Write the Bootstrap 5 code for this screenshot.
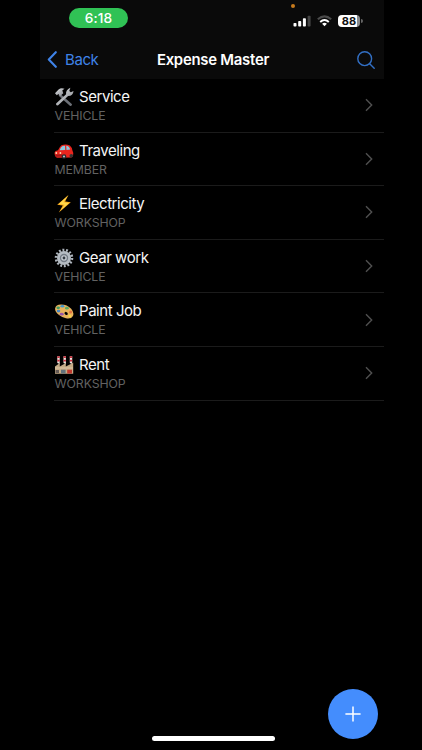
<!DOCTYPE html>
<html lang="en">
<head>
<meta charset="utf-8">
<meta name="viewport" content="width=device-width, initial-scale=1">
<title>Expense Master</title>
<link href="https://cdn.jsdelivr.net/npm/bootstrap@5.3.0/dist/css/bootstrap.min.css" rel="stylesheet">
<style>
body{background:#000;font-family:Inter,"Liberation Sans",sans-serif;color:#f5f5f5;overflow:hidden}
svg{display:block;flex:none}
.phone{width:344px;height:750px;margin-left:40px}
.top-area{background:#0a0a0a;height:79px}
.status-line{height:40px;padding:8px 21px 0 29px}
.time-pill{width:59px;height:20px;background:#30c255;color:#fff;font-size:13.7px;font-weight:500;line-height:20px;letter-spacing:.1px}
.status-icons{padding-top:7px;gap:6px}
.battery-level{width:22px;height:12px;border-radius:4px;background:linear-gradient(90deg,#fff 88%,#8b8b8b 88%);color:#111;font-size:11px;font-weight:700;line-height:12.5px}
.battery-cap{width:2px;height:4px;background:#666;border-radius:0 2px 2px 0;margin-left:1px}
.mic-dot{left:251px;top:4px;width:4px;height:4px;background:#c77a1c}
.title-line{height:39px;padding:0 9px 0 7px}
.back-link{color:#3f83e8;font-size:15px;line-height:20px;gap:8px;width:100px;letter-spacing:-.4px}
.page-title{font-size:14.9px;font-weight:600;line-height:20px;color:#fff;letter-spacing:-.25px;padding-left:4px}
.entry{height:53.6px;margin-left:14px;padding:0 11.5px 0 0;border-bottom:1px solid #1b1b1b}
.entry-text{padding-top:8px}
.entry-name{font-size:15px;line-height:20px;gap:5px;letter-spacing:-.45px}
.entry-kind{font-size:12.3px;line-height:17px;color:#626262;letter-spacing:-.1px;padding-left:.5px}
.add-btn{left:327.5px;top:689px;width:50px;height:50px;background:#448dfd}
.home-bar{left:151.5px;top:736px;width:123.5px;height:4.5px;background:#fff}
</style>
<script src="https://cdn.jsdelivr.net/npm/bootstrap@5.3.0/dist/js/bootstrap.bundle.min.js"></script>
</head>
<body>
<svg width="0" height="0" class="position-absolute"><defs>
<symbol id="chev" viewBox="0 0 8 14"><path d="M1 1.2 6.7 7 1 12.8" fill="none" stroke="#505050" stroke-width="1.4"/></symbol>
<linearGradient id="steel" x2="1" y2="1"><stop stop-color="#e0e2e5"/><stop offset="1" stop-color="#85888e"/></linearGradient>
</defs></svg>
<main class="phone position-relative">
<header class="top-area">
  <div class="status-line d-flex justify-content-between align-items-start">
    <div class="time-pill rounded-pill text-center">6:18</div>
    <div class="status-icons d-flex align-items-center">
      <svg width="18" height="12" viewBox="0 0 18 12"><g fill="#fff"><rect x=".5" y="8" width="3" height="3.5" rx=".8"/><rect x="5.2" y="6" width="3" height="5.5" rx=".8"/><rect x="9.9" y="3.3" width="3" height="8.2" rx=".8"/></g><rect x="14.6" y=".8" width="3" height="10.7" rx=".8" fill="#444"/></svg>
      <svg width="15" height="12" viewBox="0 0 15 12"><g fill="none" stroke-width="2"><path d="M.8 4.3Q7.5-1.6 14.2 4.3" stroke="#4b4b4b"/><path d="M3.2 6.9Q7.5 3 11.8 6.9" stroke="#fff"/></g><path d="M5.1 8.7Q7.5 6.8 9.9 8.7L7.5 11.3Z" fill="#fff"/></svg>
      <div class="d-flex align-items-center"><div class="battery-level text-center">88</div><div class="battery-cap"></div></div>
    </div>
  </div>
  <div class="title-line d-flex justify-content-between align-items-center">
    <a href="#" class="back-link d-flex align-items-center text-decoration-none"><svg width="10" height="17" viewBox="0 0 10 17"><path d="M8.8 1.2 1.8 8.5l7 7.3" fill="none" stroke="#3f83e8" stroke-width="2.1" stroke-linecap="round" stroke-linejoin="round"/></svg>Back</a>
    <h1 class="page-title mb-0 text-nowrap">Expense Master</h1>
    <div class="back-link d-flex justify-content-end"><svg width="18" height="18" viewBox="0 0 18 18"><g fill="none" stroke="#326fc4" stroke-width="1.4" stroke-linecap="round"><circle cx="7.7" cy="7.7" r="6.9"/><path d="m12.7 12.7 4.5 4.5"/></g></svg></div>
  </div>
</header>
<section>
  <div class="entry d-flex justify-content-between align-items-center">
    <div class="entry-text align-self-start"><div class="entry-name d-flex align-items-center"><svg width="20" height="20" viewBox="0 0 20 20"><path d="M6 8.2 16.7 17.7" stroke="#6c7077" stroke-width="2.5" stroke-linecap="round"/><path d="M1 6.2 4.6 2.4Q7 .5 10.5 1.7L8.3 3.5 9.3 6.2 6.2 9 4.3 6.9 2.8 8.3Z" fill="url(#steel)"/><path d="M2.1 16.5 12.1 7.2Q11.4 2.9 16.4.8L15.3 3.9 16.8 5.3 19.5 3.9Q19.2 8.6 14.1 9.1L4.2 18.3Q1.7 19 2.1 16.5Z" fill="url(#steel)"/></svg><span>Service</span></div><div class="entry-kind">VEHICLE</div></div>
    <svg width="8" height="14"><use href="#chev"/></svg>
  </div>
  <div class="entry d-flex justify-content-between align-items-center">
    <div class="entry-text align-self-start"><div class="entry-name d-flex align-items-center"><svg width="20" height="20" viewBox="0 0 20 20"><path d="M.6 11.5Q1 9.8 4 9.3 5.5 6 7.4 4.2 12 2.6 15.8 4.5 18 6.5 18.3 9 19.8 11.5 19 15.2L17.4 16.4 3 16.8Q.3 15.6.6 11.5Z" fill="#e9251e"/><path d="M5.6 9.2Q6.6 6 8.6 5L11 4.8 11.2 9ZM12.2 4.8Q15.2 5 16.2 8.6L12.5 9Z" fill="#8cc8df"/><path d="M1 13.8 8 13.2V15.5L2 15.7Z" fill="#a51717"/><circle cx="10" cy="15.5" r="2.3" fill="#292c30"/><circle cx="10" cy="15.5" r="1.1" fill="#b5b9bf"/><circle cx="17.3" cy="14.7" r="1.8" fill="#333"/><circle cx="2.3" cy="12" r=".9" fill="#ffddb0"/><circle cx="6.4" cy="12" r=".9" fill="#ffddb0"/></svg><span>Traveling</span></div><div class="entry-kind">MEMBER</div></div>
    <svg width="8" height="14"><use href="#chev"/></svg>
  </div>
  <div class="entry d-flex justify-content-between align-items-center">
    <div class="entry-text align-self-start"><div class="entry-name d-flex align-items-center"><svg width="20" height="20" viewBox="0 0 20 20"><path d="M14.5.9 3.2 10.8 8.8 11.5 4.8 18.5 16.8 8.3 11.1 7.5Z" fill="#f8a91c"/><path d="M14 1.5 4.9 10.1 10.7 10.7 6.2 16.9 15 8.9 9.4 8.2Z" fill="#ffd84c"/></svg><span>Electricity</span></div><div class="entry-kind">WORKSHOP</div></div>
    <svg width="8" height="14"><use href="#chev"/></svg>
  </div>
  <div class="entry d-flex justify-content-between align-items-center">
    <div class="entry-text align-self-start"><div class="entry-name d-flex align-items-center"><svg width="20" height="20" viewBox="0 0 20 20"><circle cx="10" cy="10" r="8" fill="none" stroke="#aeb5bd" stroke-width="2.6" stroke-dasharray="1.9 1.69"/><circle cx="10" cy="10" r="5.6" fill="#747c86" stroke="#b5bcc3" stroke-width="2.8"/><circle cx="10" cy="10" r="2.8" fill="#c5cbd2"/><circle cx="10" cy="10" r="1.4" fill="#333b43"/></svg><span>Gear work</span></div><div class="entry-kind">VEHICLE</div></div>
    <svg width="8" height="14"><use href="#chev"/></svg>
  </div>
  <div class="entry d-flex justify-content-between align-items-center">
    <div class="entry-text align-self-start"><div class="entry-name d-flex align-items-center"><svg width="20" height="20" viewBox="0 0 20 20"><path fill-rule="evenodd" d="M1.1 7.5Q1.7 3.5 7 3.4 13 3.3 17.2 7.7 20.4 11.5 19 15 17.2 18.3 12 17.3 8.5 16.7 5 14 1 11 1.1 7.5ZM10.3 12Q11.5 15.1 13.7 13.5 14.3 11.2 11.5 10.8Z" fill="#e9b35c"/><ellipse cx="4.2" cy="6.8" rx="1.8" ry="1.4" fill="#3d9a65"/><ellipse cx="8.4" cy="5.3" rx="2" ry="1.3" fill="#4398cd"/><ellipse cx="12.9" cy="7.2" rx="1.9" ry="1.4" fill="#58a765"/><ellipse cx="4.5" cy="10.1" rx="1.8" ry="1.4" fill="#4b88c4"/><ellipse cx="7.7" cy="13.2" rx="2" ry="1.4" fill="#9955a7"/><circle cx="16.6" cy="10.9" r="1.5" fill="#df7140"/><circle cx="15.7" cy="15" r="1.3" fill="#f5da44"/></svg><span>Paint Job</span></div><div class="entry-kind">VEHICLE</div></div>
    <svg width="8" height="14"><use href="#chev"/></svg>
  </div>
  <div class="entry d-flex justify-content-between align-items-center">
    <div class="entry-text align-self-start"><div class="entry-name d-flex align-items-center"><svg width="20" height="20" viewBox="0 0 20 20"><path d="M3.3 8V1.3H5.7V9ZM9.5 8V1.3H11.9V9ZM15.8 8V1.3H18.2V9Z" fill="#efe4de"/><path d="M3.3 1.2H5.7V3H3.3ZM3.3 4.7H5.7V6.4H3.3ZM9.5 1.2H11.9V3H9.5ZM9.5 4.7H11.9V6.4H9.5ZM15.8 1.2H18.2V3H15.8ZM15.8 4.7H18.2V6.4H15.8Z" fill="#c52f3c"/><path d="M1 18.8V11.6L5.8 8V11.5L11.8 8V11.5L19.2 7.7V18.8Z" fill="#c5ab87"/><path d="M1 13H19" stroke="#dbc4a5"/><path d="M1.5 15H5V18H1.5Z" fill="#655b57"/><path d="M7 14.7H11.6V18.5H7Z" fill="#62727d"/><path d="M13.2 14.7H18V18.5H13.2Z" fill="#c1392e"/></svg><span>Rent</span></div><div class="entry-kind">WORKSHOP</div></div>
    <svg width="8" height="14"><use href="#chev"/></svg>
  </div>
</section>
<span class="mic-dot position-absolute rounded-circle"></span>
</main>
<button class="add-btn btn rounded-circle position-fixed p-0 border-0 d-flex align-items-center justify-content-center" aria-label="Add"><svg width="16" height="16" viewBox="0 0 16 16"><path d="M8 .4V15.6M.4 8H15.6" stroke="#fff" stroke-width="1.5"/></svg></button>
<div class="home-bar position-fixed rounded-pill"></div>
</body>
</html>
